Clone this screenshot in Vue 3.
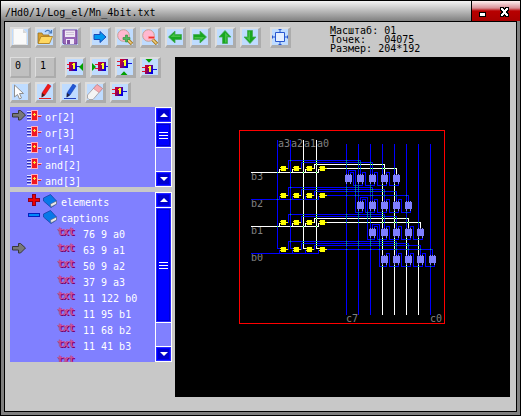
<script setup>
const fileButtons = [
  { icon: 'new' }, { icon: 'open' }, { icon: 'save' },
  { icon: 'go', gap: true }, { icon: 'zoomin' }, { icon: 'zoomout' },
  { icon: 'left' }, { icon: 'right' }, { icon: 'up' }, { icon: 'down' },
  { icon: 'fit', gap: true }
]
const pinButtons = [
  { label: '0' }, { label: '1' },
  { icon: 'pinright', gap: true }, { icon: 'pinleft' }, { icon: 'pinbottom' }, { icon: 'pintop' }
]
const editButtons = [
  { icon: 'cursor' }, { icon: 'redpen' }, { icon: 'bluepen' }, { icon: 'eraser' }, { icon: 'chip' }
]
const toolbars = [
  { name: 'pins', buttons: pinButtons },
  { name: 'edit', buttons: editButtons }
]
const gates = ['or[2]', 'or[3]', 'or[4]', 'and[2]', 'and[3]']
const captions = ['76 9 a0', '63 9 a1', '50 9 a2', '37 9 a3', '11 122 b0', '11 95 b1', '11 68 b2', '11 41 b3', '']

const arrowTurn = { left: 0, up: 90, right: 180, down: 270 }

/* ---- schematic ---- */
const BLUE = '#0000ff'
const WHITE = '#ffffff'
const wires = []
const add = (color, ...pts) => wires.push({ color, pts })

const adders = []
const ands = []
const inputX = [277, 290, 303, 316]
const inputColor = [BLUE, BLUE, WHITE, WHITE]
const rowColor = [WHITE, BLUE, WHITE, BLUE]

for (let i = 0; i < 8; i++) {
  const x = 346 + i * 12
  const split = { 3: 184, 4: 184, 5: 237, 6: 237 }[i]
  if (split) {
    add(BLUE, [x, 144], [x, split])
    add(WHITE, [x, split], [x, 314])
  } else add(BLUE, [x, 144], [x, 314])
}
inputX.forEach((x, i) => add(inputColor[i], [x, 140], [x, 248]))
for (let r = 0; r < 4; r++) {
  const y = 168 + r * 27
  add(rowColor[r], [251, y + 4], [318, y + 4])
  for (let c = 0; c < 4; c++) {
    const gx = 283 + c * 13
    ands.push({ x: gx, y })
    add(rowColor[r], [gx - 4, y + 4], [gx - 4, y + 1], [gx - 2, y + 1])
    if (r === 3) add(inputColor[c], [gx - 6, y - 1], [gx - 2, y - 1])
    const out = rowColor[r] === WHITE ? inputColor[c] : BLUE
    const tx = 360 + c * 12 + r * 12
    if (c < 3) {
      const hy = y - 8 + c * 2
      add(out, [gx + 3, y], [gx + 5, y], [gx + 5, hy], [tx, hy], [tx, y + 6])
    } else add(out, [gx + 3, y], [tx, y], [tx, y + 6])
  }
  const cy = 178 + r * 27
  for (let c = 0; c < 5; c++) {
    const cx = 348 + r * 12 + c * 12
    adders.push({ x: cx, y: cy })
    if (c < 4) add(BLUE, [cx + 2, cy - 5], [cx + 2, cy - 6], [cx + 5, cy - 6], [cx + 5, cy + 7], [cx + 14, cy + 7], [cx + 14, cy + 4])
  }
  if (r < 3) {
    const cx = 348 + r * 12
    add(BLUE, [cx, cy - 5], [cx, cy - 8], [cx + 7, cy - 8], [cx + 7, cy + 34], [cx + 14, cy + 34], [cx + 14, cy + 31])
  }
}

const hs = []
const vs = []
for (const w of wires) {
  for (let i = 1; i < w.pts.length; i++) {
    const [x1, y1] = w.pts[i - 1]
    const [x2, y2] = w.pts[i]
    if (y1 === y2) hs.push({ y: y1, a: Math.min(x1, x2), b: Math.max(x1, x2) })
    else vs.push({ x: x1, a: Math.min(y1, y2), b: Math.max(y1, y2) })
  }
}
const crossings = []
for (const h of hs) for (const v of vs) {
  if (v.x > h.a && v.x < h.b && h.y > v.a && h.y < v.b) crossings.push([v.x, h.y])
}
/* one-pixel rectangles, blue wires below white ones */
const segments = wires.flatMap(w => w.pts.slice(1).map((p, i) => {
  const q = w.pts[i]
  return {
    color: w.color,
    x: Math.min(p[0], q[0]), y: Math.min(p[1], q[1]),
    w: Math.abs(p[0] - q[0]) + 1, h: Math.abs(p[1] - q[1]) + 1
  }
})).sort((a, b) => (a.color === WHITE) - (b.color === WHITE))

const labels = [
  { t: 'a3', x: 278, y: 147 }, { t: 'a2', x: 291, y: 147 }, { t: 'a1', x: 304, y: 147 }, { t: 'a0', x: 317, y: 147 },
  { t: 'b3', x: 251, y: 180 }, { t: 'b2', x: 251, y: 207 }, { t: 'b1', x: 251, y: 234 }, { t: 'b0', x: 251, y: 261 },
  { t: 'c7', x: 346, y: 322 }, { t: 'c0', x: 430, y: 322 }
]
</script>

<template>
  <svg class="defs" width="0" height="0">
    <defs>
      <linearGradient id="rb" x1="0" y1="0" x2="1" y2="0.6">
        <stop offset="0" stop-color="#e00020" /><stop offset=".45" stop-color="#a00050" /><stop offset="1" stop-color="#0000e0" />
      </linearGradient>
      <symbol id="i-new" viewBox="0 0 16 16"><path d="M1 0h10l4 4v12H1z" fill="#fafafa" /><path d="M11 0v4h4z" fill="#d8d8d8" /><path d="M1.500 0v15.500h13V4" fill="none" stroke="#e4e4e4" /></symbol>
      <symbol id="i-open" viewBox="0 0 16 16"><path d="M1 14V4h4l1 2h6v8z" fill="#d8a030" stroke="#9a7020" stroke-width=".8" /><path d="M1 14.500l3-7h11.500l-3 7z" fill="#ffd860" stroke="#a87820" stroke-width=".8" /><path d="M8 3c2-2.500 4-2 6 .5M14.500 1v3h-3" fill="none" stroke="#4878b8" stroke-width="1.200" /></symbol>
      <symbol id="i-save" viewBox="0 0 16 16"><path d="M1 1h14v14H2l-1-1z" fill="#9868b8" stroke="#784898" /><path d="M3 1.500h10V8H3z" fill="#eee8f4" /><path d="M4 3h8v1H4zM4 5h8v1H4z" fill="#d0c0d8" /><path d="M4 10h8v5H4z" fill="#f0e8f8" /><path d="M5 11h3v4H5z" fill="#8050a0" /></symbol>
      <symbol id="i-go" viewBox="0 0 16 16"><path d="M2 5.500h6v-3l6 5.500-6 5.500v-3H2z" fill="#0098f0" stroke="#1848b8" /></symbol>
      <symbol id="i-lens" viewBox="0 0 16 16"><path d="M10 10l5 5" stroke="#a87820" stroke-width="3.400" /><path d="M10.500 10.500l4 4" stroke="#f0d080" stroke-width="1.600" /><circle cx="6.500" cy="6.500" r="5.800" fill="#ffb8d0" stroke="#c8a090" /></symbol>
      <symbol id="i-zoomin" viewBox="0 0 16 16"><use href="#i-lens" /><path d="M8.500 6h2v2.500H13v2h-2.500V13h-2v-2.500H6v-2h2.500z" fill="#50b860" stroke="#289038" stroke-width=".6" /></symbol>
      <symbol id="i-zoomout" viewBox="0 0 16 16"><use href="#i-lens" /><path d="M6.500 7.500h6v2h-6z" fill="#f03030" stroke="#ff9090" stroke-width=".5" /></symbol>
      <symbol id="i-arrow" viewBox="0 0 16 16"><path d="M1.500 8L8 2v3.500h6.500v5H8V14z" fill="#18a820" stroke="#48a858" stroke-width=".8" /><path d="M3.500 8L7.500 4.200v2.300h6V8z" fill="#48c048" /></symbol>
      <symbol id="i-fit" viewBox="0 0 16 16"><path d="M3.500 3.500h9v9h-9z" fill="#e4efff" stroke="#2858d0" /><path d="M6.500 .5h3M8 .5V3M6.500 15.500h3M8 15.500V13M.5 6.500v3M.5 8H3M15.500 6.500v3M15.500 8H13" fill="none" stroke="#2858d0" /></symbol>
      <symbol id="i-core" viewBox="0 0 16 16">
        <path d="M0 5h4v1H0zM0 9h4v1H0z" fill="#e01828" /><path d="M11 7h4v1h-4z" fill="#1010e0" />
        <path d="M3 3h8v9H3z" fill="url(#rb)" /><path d="M6 5h1V4h2v6h-2V6H6z" fill="#ffff20" />
      </symbol>
      <symbol id="i-pinright" viewBox="0 0 16 16"><use href="#i-core" x="-1" /><path d="M12 8l4-4v8z" fill="#00a000" /></symbol>
      <symbol id="i-pinleft" viewBox="0 0 16 16"><use href="#i-core" x="3" /><path d="M0 4l4 4-4 4z" fill="#00a000" /></symbol>
      <symbol id="i-pinbottom" viewBox="0 0 16 16"><use href="#i-core" y="-3" /><path d="M3.500 16L7 12.300l3.500 3.700z" fill="#00a000" /></symbol>
      <symbol id="i-pintop" viewBox="0 0 16 16"><use href="#i-core" y="3" /><path d="M3.500 0h7L7 3.700z" fill="#00a000" /></symbol>
      <symbol id="i-chip" viewBox="0 0 16 16"><use href="#i-core" /></symbol>
      <symbol id="i-cursor" viewBox="0 0 16 16"><path d="M2.500 1v12l3-2.500 2 4.500 2-1-2-4.500h4z" fill="#fff" stroke="#909090" /></symbol>
      <symbol id="i-redpen" viewBox="0 0 16 16"><path d="M5 9l6-9 3 2-6 9-3 2z" fill="#f01818" stroke="#c00010" stroke-width=".5" /><path d="M2 14.500h12" stroke="#e02020" /><path d="M5 9l-.5 4.500L8 11z" fill="#402020" /></symbol>
      <symbol id="i-bluepen" viewBox="0 0 16 16"><path d="M5 9l6-9 3 2-6 9-3 2z" fill="#2058d8" stroke="#1030a0" stroke-width=".5" /><path d="M2 14.500h12" stroke="#2040c0" /><path d="M5 9l-.5 4.500L8 11z" fill="#202040" /></symbol>
      <symbol id="i-eraser" viewBox="0 0 16 16"><path d="M.5 11L10 .5l5.500 4L6 15.500H2L.5 14z" fill="#f4f4f4" stroke="#a09898" stroke-width=".8" /><path d="M6.500 4.500L10 .5l5.500 4-3.500 4z" fill="#f8a8b0" stroke="#c08088" stroke-width=".6" /></symbol>
    </defs>
  </svg>

  <div class="window">
    <header class="titlebar">
      <div class="title">/Hd0/1/Log_el/Mn_4bit.txt</div>
      <div class="controls">
        <svg width="48" height="20" shape-rendering="crispEdges">
          <path d="M7 11h7v5H7z" fill="#000" /><path d="M8 12h5v3H8z" fill="#fff" />
          <path d="M28 6h4v1h1v-1h4v4h-1v2h1v4h-4v-1h-1v1h-4v-4h1v-2h-1z" fill="#000" />
          <path d="M29 7h2v1h1v1h1V8h1V7h2v2h-1v1h-1v2h1v1h1v2h-2v-1h-1v-1h-1v1h-1v1h-2v-2h1v-1h1v-2h-1V9h-1z" fill="#fff" />
        </svg>
      </div>
    </header>

    <main class="body">
      <div class="top">
        <div class="toolbar">
          <button v-for="b in fileButtons" :key="b.icon" class="tool" :class="{ gap: b.gap }">
            <svg width="16" height="16" viewBox="0 0 16 16">
              <use v-if="b.icon in arrowTurn" href="#i-arrow" :transform="`rotate(${arrowTurn[b.icon]} 8 8)`" />
              <use v-else :href="'#i-' + b.icon" />
            </svg>
          </button>
        </div>
        <pre class="info">Масштаб: 01
Точек:   04075
Размер: 204*192</pre>
      </div>

      <div class="work">
        <aside class="side">
          <div v-for="bar in toolbars" :key="bar.name" class="toolbar">
            <button v-for="(b, i) in bar.buttons" :key="i" class="tool" :class="{ gap: b.gap, plain: b.label }">
              <span v-if="b.label">{{ b.label }}</span>
              <svg v-else width="16" height="16" viewBox="0 0 16 16"><use :href="'#i-' + b.icon" /></svg>
            </button>
          </div>

          <section class="list short">
            <div class="rows">
              <div v-for="(g, i) in gates" :key="g" class="row">
                <svg class="mark" width="14" height="12" viewBox="0 0 14 12"><path v-if="i === 0" d="M.5 4.500h6v-3h2l5 4.500-5 5h-2v-3h-6z" fill="#787878" stroke="#383838" /></svg>
                <svg class="gate" width="15" height="12" viewBox="0 0 15 12" shape-rendering="crispEdges">
                  <path d="M0 1h5v1H0zM0 4h5v1H0zM0 7h5v1H0zM0 10h5v1H0z" fill="#e0e0ff" /><path d="M0 2h5v1H0zM0 5h5v1H0zM0 8h5v1H0z" fill="#3030b0" />
                  <path d="M4 0h7v11H4z" fill="#ffb0c0" /><path d="M5 1h5v9H5z" fill="#f01820" /><path d="M11 5h4v1h-4z" fill="#ffc0d0" /><path d="M11 6h3v1h-3z" fill="#d02040" /><path d="M6 4h3v1H6zM7 3h1v3H7z" fill="#ffe040" />
                </svg>
                <span>{{ g }}</span>
              </div>
            </div>
            <div class="scroll">
              <div class="arrow"><svg width="8" height="4"><path d="M0 4l4-4 4 4z" fill="#fff" /></svg></div>
              <div class="thumb"><i></i><i></i><i></i></div>
              <div class="track"></div>
              <div class="arrow"><svg width="8" height="4"><path d="M0 0h8L4 4z" fill="#fff" /></svg></div>
            </div>
          </section>

          <section class="list long">
            <div class="rows">
              <div v-for="(g, i) in ['elements', 'captions']" :key="g" class="row">
                <svg class="sign" width="14" height="13" viewBox="0 0 14 13" shape-rendering="crispEdges">
                  <path v-if="i === 0" d="M4.500 1.500h3v4h4v3h-4v4h-3v-4h-4v-3h4z" fill="#f00000" stroke="#900020" />
                  <path v-else d="M.5 4.500h11v3H.5z" fill="#0088f8" stroke="#0020c0" />
                </svg>
                <svg class="book" width="15" height="14" viewBox="0 0 15 14"><path d="M.5 4L7.500 .5l6 6.500v3L8 13.500 .5 7z" fill="#0878e8" stroke="#1840a8" stroke-width=".8" /><path d="M7.500 10l6-3v3L8 13z" fill="#e8e8e8" stroke="#606080" stroke-width=".6" /></svg>
                <span>{{ g }}</span>
              </div>
              <div v-for="(c, i) in captions" :key="i" class="row">
                <svg class="mark" width="14" height="12" viewBox="0 0 14 12"><path v-if="i === 1" d="M.5 4.500h6v-3h2l5 4.500-5 5h-2v-3h-6z" fill="#787878" stroke="#383838" /></svg>
                <b class="txt">txt</b>
                <span>{{ c }}</span>
              </div>
            </div>
            <div class="scroll">
              <div class="arrow"><svg width="8" height="4"><path d="M0 4l4-4 4 4z" fill="#fff" /></svg></div>
              <div class="thumb"><i></i><i></i><i></i></div>
              <div class="track"></div>
              <div class="arrow"><svg width="8" height="4"><path d="M0 0h8L4 4z" fill="#fff" /></svg></div>
            </div>
          </section>
        </aside>

        <svg class="canvas" width="335" height="340" viewBox="175 57 335 340">
          <text v-for="l in labels" :key="l.t" :x="l.x" :y="l.y">{{ l.t }}</text>
          <g shape-rendering="crispEdges">
            <rect v-for="(s, i) in segments" :key="i" :x="s.x" :y="s.y" :width="s.w" :height="s.h" :fill="s.color" />
            <rect v-for="(c, i) in crossings" :key="'x' + i" :x="c[0]" :y="c[1]" width="1" height="1" fill="#00ff00" />
            <path v-for="(g, i) in ands" :key="'g' + i" :d="`M${g.x - 2} ${g.y - 2}h5v2h2v1h-2v2h-5v-1h-1v-1h1v-1h-1v-1h1z`" fill="#ffff00" />
            <path v-for="(a, i) in adders" :key="'a' + i" :d="`M${a.x - 3} ${a.y - 3}h1v-1h1v1h1v-1h1v1h1v-1h1v1h1v7h-1v2h-1v-2h-3v2h-1v-2h-1z`" fill="#8080ff" />
            <rect x="239.5" y="130.5" width="205" height="193" fill="none" stroke="#ff0000" />
          </g>
        </svg>
      </div>
    </main>
  </div>
</template>

<style>
body { margin: 0; background: #000; }
</style>

<style scoped>
.defs { position: absolute; }
.window {
  box-sizing: border-box; width: 521px; height: 416px; background: #808080;
  border: 1px solid #000; display: flex; flex-direction: column;
  font: 10px/12px "DejaVu Sans Mono", "Liberation Mono", monospace; color: #000;
}
.titlebar { display: flex; height: 20px; flex: none; }
.title { flex: 1; padding-left: 4px; line-height: 24px; background: linear-gradient(#f4f4f4, #808080); }
.controls { width: 48px; border-left: 1px solid #000; background: linear-gradient(#fff0f0 0, #d89098 35%, #b80000 50%, #a80000 100%); }
.controls svg { display: block; }
.body {
  flex: 1; margin: 0 3px 3px; border: 1px solid #000; background: #c8c8c8; padding: 5px; min-height: 0;
}
.top { display: flex; height: 30px; }
.toolbar { display: flex; gap: 4px; height: 21px; }
.tool {
  box-sizing: border-box; width: 21px; height: 21px; margin: 0; padding: 0; display: flex; align-items: center; justify-content: center;
  background: #bfdcff; border: 2px solid; border-color: #dedede #acacac #acacac #dedede; border-width: 2px 3px 3px 2px;
  font: inherit; color: #000;
}
.tool svg { display: block; flex: none; }
.tool.gap { margin-left: 5px; }
.tool.plain { background: #c0c0c0; border-width: 1px 2px 2px 1px; }
.tool.plain span { margin-right: 4px; margin-top: -2px; }
.info { margin: -1px 0 0 39px; font: inherit; line-height: 9px; }
.work { display: flex; gap: 3px; }
.side { width: 162px; display: flex; flex-direction: column; gap: 4px; }
.list { display: flex; color: #fff; }
.short { height: 80px; }
.long { height: 170px; margin-top: 1px; }
.rows { width: 145px; background: #8080ff; overflow: hidden; }
.row { display: flex; height: 16px; align-items: flex-start; white-space: pre; }
.row span { line-height: 10px; padding-top: 6px; height: 10px; }
.mark { margin: 2px 1px 0 2px; }
.gate { margin: 3px 3px 0 0; }
.sign { margin: 1px 1px 0 18px; }
.book { margin: 2px 3px 0 0; }
.txt { margin: 2px 8px 0 31px; width: 17px; font: bold 11px/12px "DejaVu Sans Mono", monospace; letter-spacing: -1px; text-indent: -1px; color: #c85098; text-shadow: 1px 1px 0 #780068; }
.scroll { box-sizing: border-box; width: 17px; background: #8080ff; border: 1px solid #fff; display: flex; flex-direction: column; }
.arrow, .thumb { display: flex; align-items: center; justify-content: center; background: #0000d0; border: 1px solid #2828ff; box-sizing: border-box; box-shadow: inset 0 0 0 1px #0000ff; }
.arrow { height: 14px; flex: none; }
.thumb { flex: none; flex-direction: column; gap: 2px; background: #0000ff; box-shadow: inset 0 0 0 1px #0000d0; outline: 1px solid #fff; margin-top: 1px; }
.thumb i { width: 9px; height: 1px; background: #fff; }
.short .thumb { height: 24px; }
.long .thumb { height: 114px; }
.track { flex: 1; margin-top: 1px; border-bottom: 1px solid #fff; }
.canvas { display: block; background: #000; flex: none; }
.canvas text { fill: #808080; }
</style>
